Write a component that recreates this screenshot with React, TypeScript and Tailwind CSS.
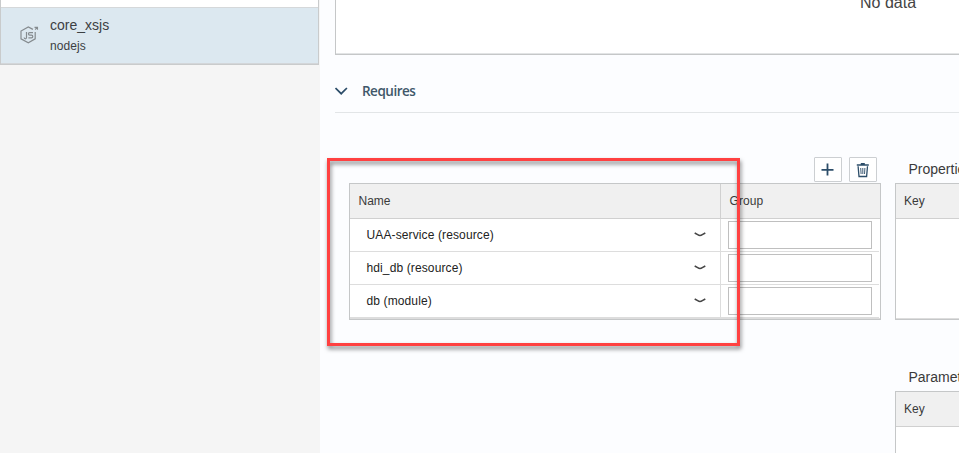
import React from "react";

const sans = "font-['Liberation_Sans',Arial,sans-serif]";

function NodeIcon() {
  return (
    <svg width="19" height="18" viewBox="0 0 19 18" fill="none" stroke="#858b8f" strokeWidth="1.2" className="mt-[18px] ml-[19px] shrink-0">
      <path d="M12.9 3.4 8.3 1 1 5v7.9l7.3 3.8 6.9-3.8V6" />
      <path d="M6.5 6v5.6c0 .8-.5 1.2-1.1 1.2-.7 0-1.2-.4-1.2-1.2M13 6.6H9.7c-1.7 0-1.7 2.5 0 2.5h1.8c1.7 0 1.7 2.7 0 2.7H8.4" />
      <path d="M14.5 1.4h3v2.4M17.3 1.6l-2.2 1.9" strokeWidth="1.1" />
    </svg>
  );
}

function Sidebar() {
  return (
    <aside className="w-[320px] shrink-0 bg-[#f5f5f5]">
      <div className="w-[319px] border-x border-b border-[#c9cbcc] bg-white">
        <div className="h-[8px] border-b border-[#d5d8da]" />
        <div className="flex h-[56px] border-b border-[#d3d6d9] bg-[#dce8f0]">
          <NodeIcon />
          <div className="ml-[11px] text-[#3c4043]">
            <div className="mt-[9px] text-[14px] leading-[17px]">core_xsjs</div>
            <div className="mt-[5px] text-[12px] leading-[15px] tracking-[0.1px]">nodejs</div>
          </div>
        </div>
      </div>
    </aside>
  );
}

function RowChevron() {
  return (
    <svg width="12" height="5" viewBox="0 0 12 5" fill="none" stroke="#444" strokeWidth="1.5" className="mr-[14px] -mt-px">
      <path d="M.7 1 3.7 2.6Q6 4.2 8.3 2.6L11.3 1" />
    </svg>
  );
}

function RequirementRow({ name }: { name: string }) {
  return (
    <div className="flex h-[33px]">
      <div className="flex w-[370px] items-center justify-between border-b border-[#ddd] pl-[16.5px] text-[12px] tracking-[0.12px] text-[#222]">
        <span>{name}</span>
        <RowChevron />
      </div>
      <div className="mr-px w-[159px] border-b border-l border-[#ddd] pt-[2px] pl-[7px]">
        <input aria-label={`${name} group`} className="block h-[28px] w-[144px] border border-[#bfbfbf] bg-white outline-none" />
      </div>
    </div>
  );
}

function KeyTable({ title, bodyClass }: { title: string; bodyClass: string }) {
  return (
    <section className="w-[64px] overflow-hidden">
      <h3 className="h-[30px] pl-[13.5px] text-[14px] leading-[32px] whitespace-nowrap text-[#3a3a3a]">{title}</h3>
      <div className="w-[300px] border border-[#c5c7c8] bg-white">
        <div className="h-[35px] border-b border-[#d0d0d0] bg-[#f0f0f0] pl-[8px] text-[12px] leading-[34px] text-[#3a3a3a]">Key</div>
        <div className={bodyClass} />
      </div>
    </section>
  );
}

function ToolbarButton({ label, children }: { label: string; children: React.ReactNode }) {
  return (
    <button aria-label={label} className="flex h-[25px] w-[28px] items-start justify-start rounded-[1px] border border-[#cccfd2] bg-white pt-[5px] pl-[6px]">
      {children}
    </button>
  );
}

function RequirementsTable() {
  return (
    <section className="ml-[14px] w-[532px]">
      <div className="mt-[4px] flex h-[26px] justify-end gap-[7px] pr-[4px]">
        <ToolbarButton label="Add">
          <svg width="13" height="13" viewBox="0 0 13 13" stroke="#2c4d69" strokeWidth="1.8">
            <path d="M6.5 .5v12M.5 6.9h12" />
          </svg>
        </ToolbarButton>
        <ToolbarButton label="Delete">
          <svg width="14" height="15" viewBox="0 0 14 15" fill="none" stroke="#2c4d69">
            <path d="M.8 2h12M4.8 .7h4" strokeWidth="1.6" />
            <path d="M2.1 3.2 3 13.5h7.6l.9-10.3" strokeWidth="1.3" />
            <path d="M4.7 5 5.1 11M6.8 5V11M8.9 5 8.5 11" strokeWidth=".9" />
          </svg>
        </ToolbarButton>
      </div>
      <div className="border border-[#c5c7c8] bg-white">
        <div className="flex h-[35px] border-b border-[#d0d0d0] bg-[#f0f0f0] text-[12px] leading-[34px] text-[#3a3a3a]">
          <div className="w-[370px] pl-[8.5px]">Name</div>
          <div className="border-l border-[#d0d0d0] pl-[8.5px] tracking-[0.1px]">Group</div>
        </div>
        <RequirementRow name="UAA-service (resource)" />
        <RequirementRow name="hdi_db (resource)" />
        <RequirementRow name="db (module)" />
        <div className="h-px border-b border-[#ddd]" />
      </div>
    </section>
  );
}

export default function App() {
  return (
    <div className={`relative flex h-[453px] w-[959px] overflow-hidden bg-[#fcfdff] ${sans}`}>
      <Sidebar />
      <main className="w-[639px] shrink-0 pl-[15px]">
        <div className="h-[55px] overflow-hidden border-b border-l border-[#c5c7c8] bg-white">
          <div className="h-[54px] border-b border-[#e2e4e5] pl-[524px] text-[16px] leading-[6px] text-[#444]">No data</div>
        </div>
        <div className="flex h-[58px] items-center border-b border-[#e2e5e7] pb-[1px] pt-[16px]">
          <svg width="13" height="8" viewBox="0 0 13 8" fill="none" stroke="#2c4d69" strokeWidth="1.7">
            <path d="m.5 1 5.7 5.7L11.9 1" />
          </svg>
          <h2 className="ml-[14px] font-['Open_Sans','Noto_Sans',sans-serif] text-[13.5px] font-semibold tracking-[-0.5px] text-[#40576a]">Requires</h2>
        </div>
        <div className="flex pt-[40px]">
          <RequirementsTable />
          <div className="ml-[14px]">
            <KeyTable title="Properties" bodyClass="h-[100px] border-b border-[#ddd]" />
            <div className="h-[41px]" />
            <KeyTable title="Parameters" bodyClass="h-[100px]" />
          </div>
        </div>
      </main>
      <div className="pointer-events-none absolute top-[158px] left-[327px] h-[188px] w-[413px] border-[3px] border-[#ff4141] [filter:drop-shadow(1px_3px_2px_rgba(0,0,0,0.5))]" />
    </div>
  );
}
